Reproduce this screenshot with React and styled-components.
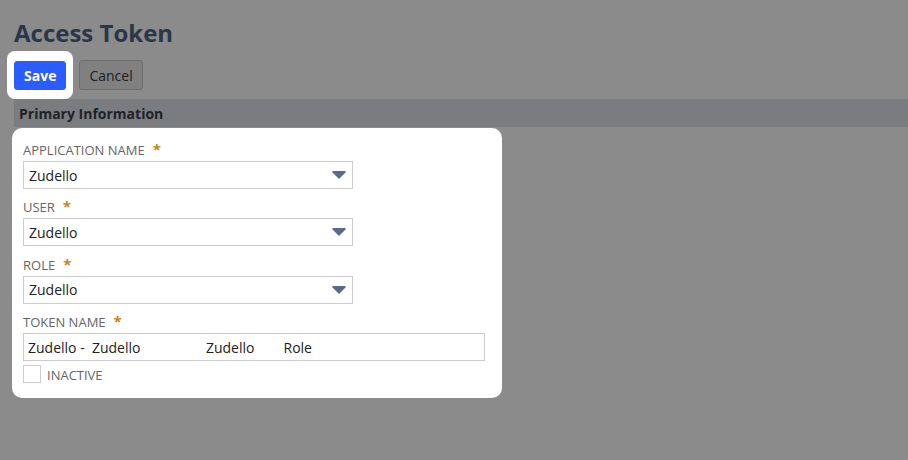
import React from 'react'
import styled, { createGlobalStyle } from 'styled-components'

const GlobalStyle = createGlobalStyle`
  html, body {
    margin: 0;
    padding: 0;
    background: #8b8b8b;
    font-family: 'Open Sans', 'DejaVu Sans', sans-serif;
  }
`

const Page = styled.div`
  width: 908px;
  height: 460px;
  padding: 18px 0 0 14px;
  box-sizing: border-box;
  overflow: hidden;
`

const Title = styled.h1`
  margin: 0;
  font-size: 24px;
  line-height: 30px;
  font-weight: 700;
  color: #2b3648;
`

const Toolbar = styled.div`
  display: flex;
  align-items: center;
  margin-top: 3px;
`

const Spotlight = styled.div`
  display: flex;
  background: #fff;
  border-radius: 8px;
  padding: 10px 7px 9px;
  margin-left: -7px;
`

const Button = styled.button`
  height: ${(p) => (p.$primary ? '29px' : '30px')};
  padding: 0 9px;
  border-radius: 3px;
  font-family: 'Open Sans', sans-serif;
  font-size: 14px;
  font-weight: ${(p) => (p.$primary ? 700 : 400)};
  color: ${(p) => (p.$primary ? '#fff' : '#1e1e1e')};
  background: ${(p) => (p.$primary ? '#2b5cff' : '#808080')};
  border: 1px solid ${(p) => (p.$primary ? '#2b5cff' : '#6f6f6f')};
  margin-left: ${(p) => (p.$primary ? '0' : '6px')};
  cursor: pointer;
`

const Band = styled.div`
  height: 28px;
  background: #7a7c80;
  padding-left: 5px;
  display: flex;
  align-items: center;
  font-size: 14px;
  font-weight: 700;
  color: #1f2226;
`

const Card = styled.div`
  width: 490px;
  margin: 1px 0 0 -2px;
  background: #fff;
  border-radius: 10px;
  padding: 12px 11px 15px;
  box-sizing: border-box;
  display: flex;
  flex-direction: column;
  gap: 8.4px;
`

const Field = styled.div`
  display: flex;
  flex-direction: column;
  gap: 2px;
`

const Label = styled.label`
  font-size: 13px;
  line-height: 18px;
  color: #666;
  text-transform: uppercase;
`

const Star = styled.span`
  color: #c3851d;
  font-size: 15px;
  font-weight: 700;
  margin-left: 8px;
`

const SelectBox = styled.div`
  width: 330px;
  height: 28px;
  box-sizing: border-box;
  border: 1px solid #ccc;
  display: flex;
  align-items: center;
  justify-content: space-between;
  padding: 0 6px 0 5px;
  font-size: 14px;
  color: #222;
`

const TextInput = styled.input`
  width: 462px;
  height: 28px;
  box-sizing: border-box;
  border: 1px solid #ccc;
  padding: 0 4px;
  font-family: 'Open Sans', sans-serif;
  font-size: 14px;
  color: #222;
  outline: none;
`

const CheckRow = styled.div`
  display: flex;
  align-items: flex-end;
  gap: 6px;
  margin-top: -4.4px;
`

const Box = styled.span`
  width: 18px;
  height: 18px;
  box-sizing: border-box;
  border: 1px solid #ccc;
  background: #fff;
`

const CheckLabel = styled.span`
  font-size: 13px;
  line-height: 15px;
  color: #666;
`

const Arrow = () => (
  <svg width="14" height="8" viewBox="0 0 14 8">
    <path d="M0.5 0 H13.5 V1.6 L7 8 L0.5 1.6 Z" fill="#5a6a8b" />
  </svg>
)

const Select = ({ value }) => (
  <SelectBox>
    <span>{value}</span>
    <Arrow />
  </SelectBox>
)

const fields = ['Application Name', 'User', 'Role']

export default function App() {
  return (
    <Page>
      <GlobalStyle />
      <Title>Access Token</Title>
      <Toolbar>
        <Spotlight>
          <Button $primary>Save</Button>
        </Spotlight>
        <Button>Cancel</Button>
      </Toolbar>
      <Band>Primary Information</Band>
      <Card>
        {fields.map((f) => (
          <Field key={f}>
            <Label>
              {f}
              <Star>*</Star>
            </Label>
            <Select value="Zudello" />
          </Field>
        ))}
        <Field>
          <Label>
            Token Name
            <Star>*</Star>
          </Label>
          <TextInput
            readOnly
            value={'Zudello -  Zudello                  Zudello        Role'}
          />
        </Field>
        <CheckRow>
          <Box />
          <CheckLabel>INACTIVE</CheckLabel>
        </CheckRow>
      </Card>
    </Page>
  )
}
